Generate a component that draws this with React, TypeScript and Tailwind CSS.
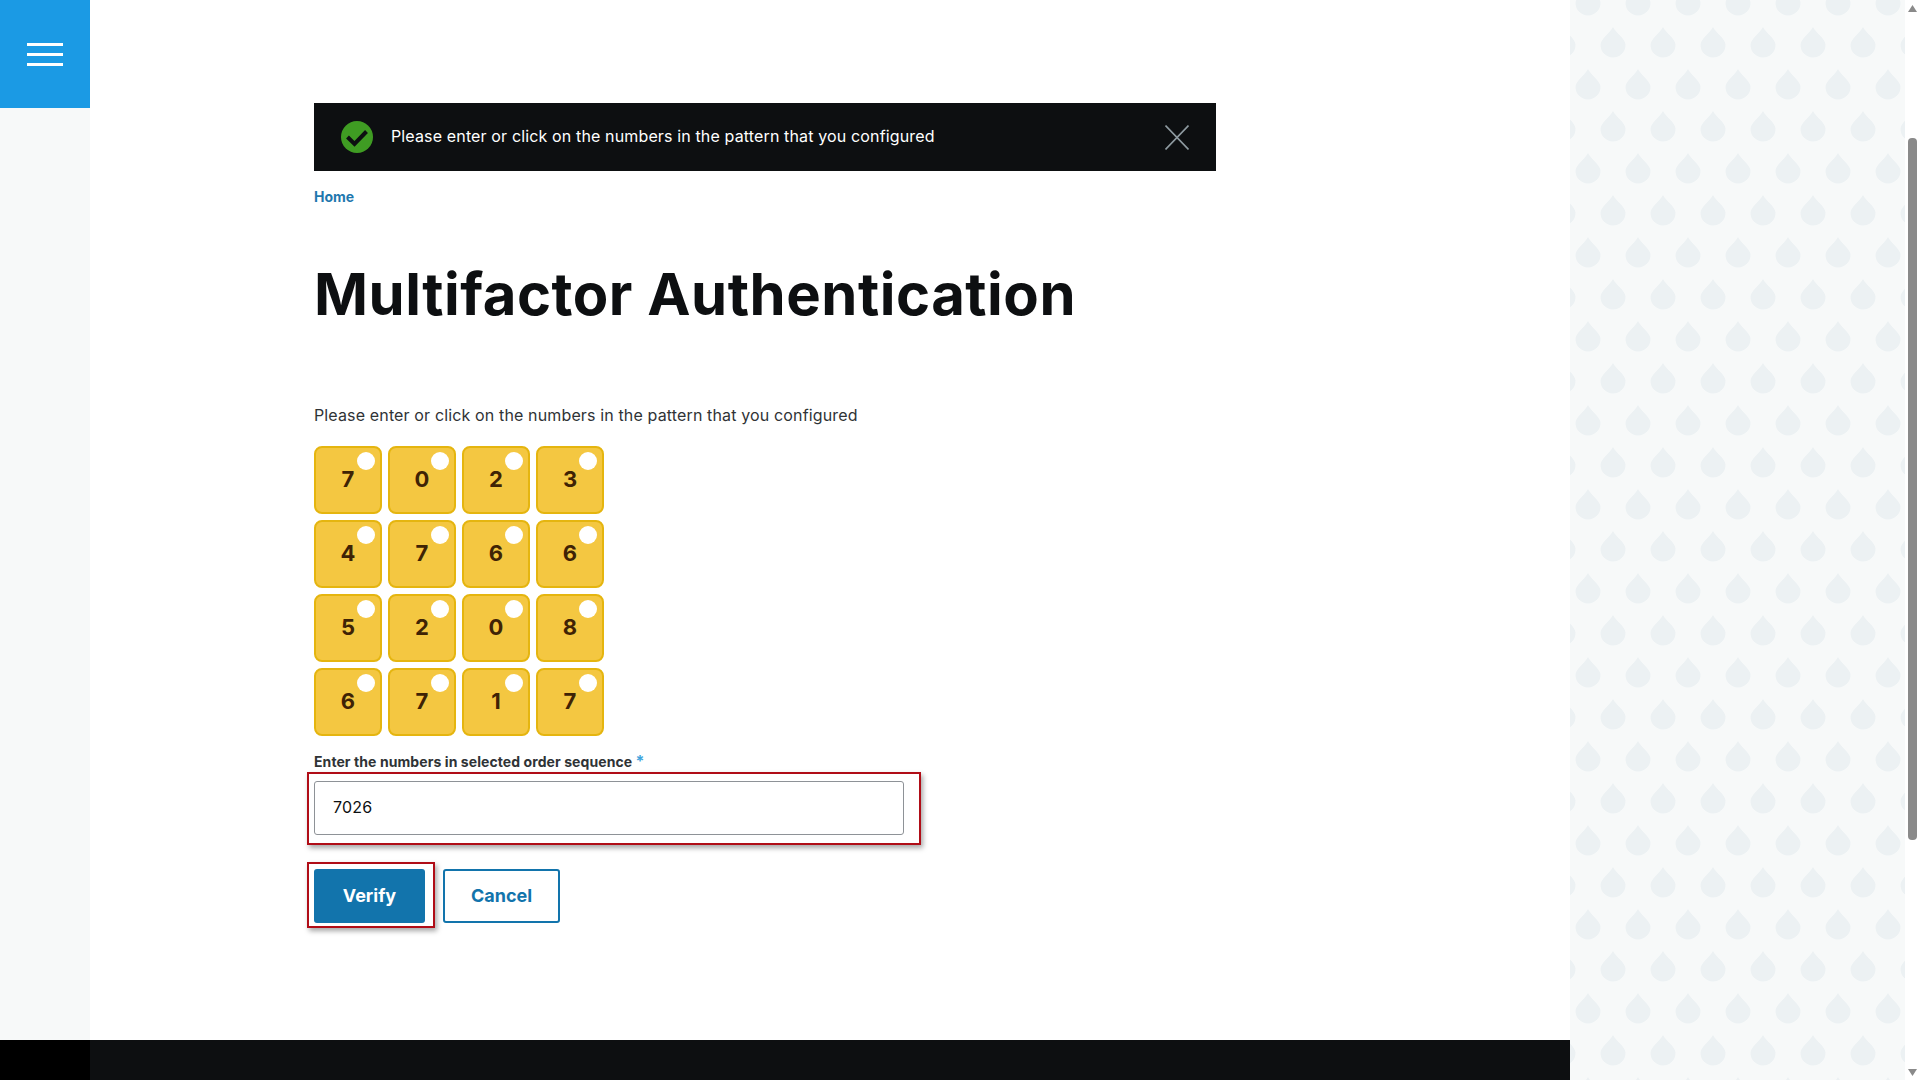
const tiles = ['7', '0', '2', '3', '4', '7', '6', '6', '5', '2', '0', '8', '6', '7', '1', '7']

const drop = 'M0 -15 C3 -9 12.5 -3 12.5 3 A12.5 12.5 0 0 1 -12.5 3 C-12.5 -3 -3 -9 0 -15Z'

export default function App() {
    return (
        <div className="flex h-screen overflow-hidden bg-white font-['Inter',sans-serif] text-[#2f3336]">
            {/* Левая колонка с кнопкой меню */}
            <div className="flex w-[90px] shrink-0 flex-col bg-[#f7f9f9]">
                <div className="flex h-[108px] flex-col items-center gap-[7px] bg-[#1b9ae4] pt-[43px]">
                    <span className="h-[3px] w-[36px] bg-white" />
                    <span className="h-[3px] w-[36px] bg-white" />
                    <span className="h-[3px] w-[36px] bg-white" />
                </div>
                <div className="grow" />
                <div className="h-[40px] bg-black" />
            </div>

            <div className="flex w-[1480px] shrink-0 flex-col">
                <main className="grow pl-[224px] pt-[103px]">
                    <div className="flex h-[68px] w-[902px] items-center justify-between bg-[#0d0f11] pl-[27px] pr-[27px]">
                        <div className="flex items-center gap-[18px]">
                            <svg width="32" height="32" viewBox="0 0 32 32">
                                <circle cx="16" cy="16" r="16" fill="#3f9c23" />
                                <path d="M6.5 16 L13.5 23 L25.5 10.5" fill="none" stroke="#0d0f11" strokeWidth="4" />
                            </svg>
                            <span className="pb-[2px] text-[16px] leading-6 tracking-[0.14px] text-white">
                                Please enter or click on the numbers in the pattern that you configured
                            </span>
                        </div>
                        <svg width="24" height="25" viewBox="0 0 24 25">
                            <path d="M0.5 0.5 L23.5 24.5 M23.5 0.5 L0.5 24.5" stroke="#8e9aa0" strokeWidth="1.6" fill="none" />
                        </svg>
                    </div>

                    <a className="mt-[16px] block text-[14px] font-bold leading-5 text-[#1f78ae]">Home</a>

                    <h1 className="mt-[52px] text-[58px] font-bold leading-[70px] tracking-[0.52px] text-[#0d0f11]">
                        Multifactor Authentication
                    </h1>

                    <p className="mt-[74px] text-[16px] leading-6 tracking-[0.14px]">
                        Please enter or click on the numbers in the pattern that you configured
                    </p>

                    {/* Сетка с цифрами */}
                    <div className="mt-[19px] grid w-[290px] grid-cols-4 gap-[6px]">
                        {tiles.map((n, i) => (
                            <div
                                key={i}
                                className="relative flex h-[68px] w-[68px] items-center justify-center rounded-[8px] border-2 border-[#e5b50f] bg-[#f4c741] pb-[2px] text-[22px] font-bold text-[#3f2305]"
                            >
                                {n}
                                <span className="absolute right-[5px] top-[4px] h-[18px] w-[18px] rounded-full bg-white" />
                            </div>
                        ))}
                    </div>

                    <label className="mt-[16px] block text-[14px] font-bold leading-5 tracking-[0.08px]">
                        Enter the numbers in selected order sequence <span className="text-[16px] leading-[16px] text-[#3fa4dc]">*</span>
                    </label>

                    <div className="-ml-[7px] h-[73px] w-[614px] border-2 border-[#b00d17] pl-[5px] pt-[7px] shadow-[2px_3px_5px_rgba(0,0,0,0.35)]">
                        <input
                            readOnly
                            value="7026"
                            className="h-[54px] w-[590px] rounded-[3px] border border-[#8e9297] pb-[2px] pl-[18px] text-[16px] tracking-[0.2px] text-[#0d0f11] outline-none"
                        />
                    </div>

                    <div className="mt-[17px] flex items-start">
                        <div className="-ml-[7px] h-[66px] w-[128px] border-2 border-[#b00d17] pl-[5px] pt-[5px] shadow-[2px_3px_5px_rgba(0,0,0,0.35)]">
                            <button className="h-[54px] w-[111px] rounded-[3px] bg-[#1274ac] pb-[2px] text-[18px] font-bold text-white">
                                Verify
                            </button>
                        </div>
                        <button className="ml-[8px] mt-[7px] h-[54px] w-[117px] rounded-[3px] border-2 border-[#1274ac] bg-white pb-[2px] text-[18px] font-bold text-[#1274ac]">
                            Cancel
                        </button>
                    </div>
                </main>
                <div className="h-[40px] bg-[#0d0f11]" />
            </div>

            {/* Правая панель с капельками */}
            <aside className="h-full w-[335px] shrink-0 bg-[#f7f9f9]">
                <svg className="block h-full w-full">
                    <defs>
                        <pattern id="drops" width="50" height="84" patternUnits="userSpaceOnUse">
                            <path d={drop} transform="translate(18 0)" fill="#ecf1f3" />
                            <path d={drop} transform="translate(18 84)" fill="#ecf1f3" />
                            <path d={drop} transform="translate(43 42)" fill="#ecf1f3" />
                            <path d={drop} transform="translate(-7 42)" fill="#ecf1f3" />
                        </pattern>
                    </defs>
                    <rect width="100%" height="100%" fill="url(#drops)" />
                </svg>
            </aside>

            {/* Полоса прокрутки */}
            <div className="flex w-[15px] shrink-0 flex-col items-center bg-white pt-[5px]">
                <svg width="9" height="7" viewBox="0 0 9 7">
                    <path d="M4.5 0 L9 7 H0Z" fill="#8a8a8a" />
                </svg>
                <div className="mt-[126px] h-[702px] w-[9px] rounded-[4px] bg-[#8a8a8a]" />
                <svg className="mt-[229px]" width="9" height="7" viewBox="0 0 9 7">
                    <path d="M0 0 H9 L4.5 7Z" fill="#8a8a8a" />
                </svg>
            </div>
        </div>
    )
}
